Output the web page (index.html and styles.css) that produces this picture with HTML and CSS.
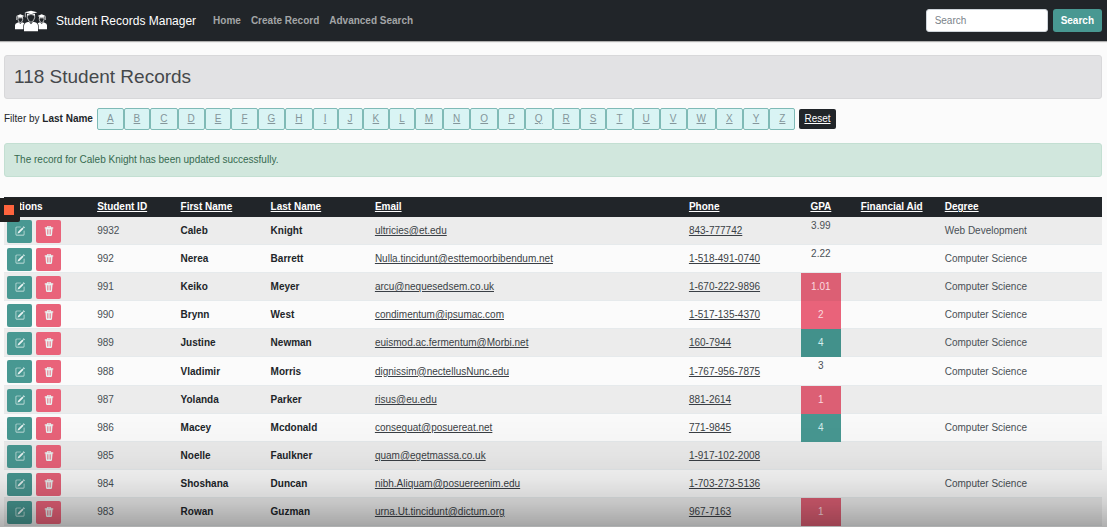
FILE: index.html
```html
<!DOCTYPE html>
<html lang="en">
<head>
<meta charset="utf-8">
<title>Student Records Manager</title>
<link rel="stylesheet" href="styles.css">
</head>
<body>
<svg class="sprite" aria-hidden="true">
  <symbol id="edit" viewBox="0 0 16 16">
    <path d="M15.502 1.94a.5.5 0 0 1 0 .706L14.459 3.69l-2-2L13.502.646a.5.5 0 0 1 .707 0l1.293 1.293zm-1.75 2.456-2-2L4.939 9.21a.5.5 0 0 0-.121.196l-.805 2.414a.25.25 0 0 0 .316.316l2.414-.805a.5.5 0 0 0 .196-.12l6.813-6.814z"/>
    <path d="M1 13.5A1.5 1.5 0 0 0 2.500 15h11a1.500 1.500 0 0 0 1.500-1.500v-6a.5.5 0 0 0-1 0v6a.5.5 0 0 1-.5.5h-11a.5.5 0 0 1-.5-.5v-11a.5.5 0 0 1 .5-.5H9a.5.5 0 0 0 0-1H2.500A1.500 1.500 0 0 0 1 2.500z"/>
  </symbol>
  <symbol id="trash" viewBox="0 0 16 16">
    <path fill-rule="evenodd" d="M6 0h4a1.500 1.500 0 0 1 1.500 1.500V2H14a1 1 0 0 1 0 2h-.3l-.9 10.200A2 2 0 0 1 10.900 16H5.100a2 2 0 0 1-1.900-1.800L2.300 4H2a1 1 0 0 1 0-2h2.500v-.5A1.500 1.500 0 0 1 6 0zm0 1.200V2h4v-.8zM4.700 5l.5 8.500h1L5.700 5zm2.800 0v8.500h1V5zm2.800 0-.5 8.500h1l.5-8.500z"/>
  </symbol>
</svg>

<header class="navbar">
  <a class="brand" href="#">
    <svg class="logo" viewBox="0 0 96 64" aria-hidden="true">
      <g id="grad-side">
        <path fill="#fff" d="M4 17 16 12l12 5-12 5zM8 20l8 3 8-3v4H8zM0 57V45q0-6 7-8l4-1 5 5 5-5 4 1q3 1 4 3v17z"/>
        <path fill="none" stroke="#fff" stroke-width="2" d="M9 23v5q1 8 7 9 6-1 7-9v-5M5 18v11"/>
      </g>
      <use href="#grad-side" transform="matrix(-1 0 0 1 96 0)"/>
      <path fill="#212529" d="M25 64V46q0-8 10-11l13-4 13 4q10 3 10 11v18z"/>
      <path fill="#fff" d="M29 6 48 1l19 5-19 6zM36 10l12 3 12-3v6q-12-4-24 0zM27 63V47q0-8 9-11l6-2 6 8 6-8 6 2q9 3 9 11v16z"/>
      <path fill="none" stroke="#fff" stroke-width="2" d="M37 15v7q2 11 11 14 9-3 11-14v-7M31 7v14"/>
    </svg>
    <span>Student Records Manager</span>
  </a>
  <nav class="nav">
    <a href="#">Home</a>
    <a href="#">Create Record</a>
    <a href="#">Advanced Search</a>
  </nav>
  <form class="search">
    <input type="search" placeholder="Search" aria-label="Search">
    <button type="button">Search</button>
  </form>
</header>

<main class="content">
  <h1 class="heading">118 Student Records</h1>
  <div class="filter">
    <span>Filter by <strong>Last Name</strong></span>
    <div class="letters">
      <a href="#">A</a><a href="#">B</a><a href="#">C</a><a href="#">D</a><a href="#">E</a><a href="#">F</a><a href="#">G</a><a href="#">H</a><a href="#">I</a><a href="#">J</a><a href="#">K</a><a href="#">L</a><a href="#">M</a><a href="#">N</a><a href="#">O</a><a href="#">P</a><a href="#">Q</a><a href="#">R</a><a href="#">S</a><a href="#">T</a><a href="#">U</a><a href="#">V</a><a href="#">W</a><a href="#">X</a><a href="#">Y</a><a href="#">Z</a>
    </div>
    <a class="reset" href="#">Reset</a>
  </div>
  <p class="alert" role="status">The record for Caleb Knight has been updated successfully.</p>

  <table class="records">
    <colgroup>
      <col class="c-actions"><col class="c-id"><col class="c-first"><col class="c-last"><col class="c-email"><col class="c-phone"><col class="c-gpa"><col class="c-aid"><col>
    </colgroup>
    <thead>
      <tr>
        <th>Actions</th>
        <th><a href="#">Student ID</a></th>
        <th><a href="#">First Name</a></th>
        <th><a href="#">Last Name</a></th>
        <th><a href="#">Email</a></th>
        <th><a href="#">Phone</a></th>
        <th class="center"><a href="#">GPA</a></th>
        <th class="center"><a href="#">Financial Aid</a></th>
        <th><a href="#">Degree</a></th>
      </tr>
    </thead>
    <tbody id="rows"></tbody>
  </table>
</main>

<div class="recorder"><span></span></div>
<div class="shade"></div>
<script src="records.js"></script>
</body>
</html>
```
FILE: styles.css
```css
* { box-sizing: border-box; }

body {
  margin: 0;
  background: #fbfbfb;
  color: #212529;
  font: 10px/14px "Liberation Sans", Arial, sans-serif;
  overflow: hidden;
}

a { color: inherit; }
.sprite { display: none; }

.navbar {
  display: flex;
  align-items: center;
  height: 41px;
  padding: 0 5px 0 15px;
  background: #212529;
  box-shadow: 0 1px 1px rgba(0, 0, 0, .3);
}
.brand {
  display: flex;
  align-items: center;
  gap: 9px;
  color: #fff;
  font-size: 12px;
  text-decoration: none;
}
.logo { width: 32px; height: 22px; }
.nav { display: flex; gap: 10px; margin-left: 17px; }
.nav a { color: #a3a5a7; font-weight: bold; text-decoration: none; }
.search { display: flex; gap: 5px; margin-left: auto; }
.search input {
  width: 122px;
  height: 23px;
  padding: 0 8px;
  border: 1px solid #ced4da;
  border-radius: 3px;
  background: #fff;
  font: inherit;
}
.search input::placeholder { color: #7b838a; }
.search button {
  height: 23px;
  padding: 0 8px;
  border: 0;
  border-radius: 3px;
  background: #489892;
  color: #fff;
  font: bold 10px/14px "Liberation Sans", Arial, sans-serif;
}

.content { padding: 14px 5px 0 4px; }
.heading {
  margin: 0 0 9px;
  padding: 9px;
  border: 1px solid #d8d8da;
  border-radius: 3px;
  background: #e2e2e4;
  color: #45484b;
  font-size: 19px;
  font-weight: normal;
  line-height: 24px;
}
.filter { display: flex; align-items: center; gap: 4px; }
.letters { display: flex; }
.letters a {
  min-width: 25px;
  padding: 3px 9px;
  border: 1px solid #7fbab6;
  border-radius: 2px;
  background: #d9f4f4;
  color: #84969b;
  text-align: center;
}
.reset {
  padding: 3px 5px;
  border-radius: 2px;
  background: #212529;
  color: #fff;
}
.alert {
  margin: 13px 0 20px;
  padding: 9px;
  border: 1px solid #c3dfd2;
  border-radius: 3px;
  background: #d1e7dd;
  color: #366a50;
}

.records {
  width: 100%;
  table-layout: fixed;
  border-collapse: collapse;
}
.c-actions { width: 8.3%; }
.c-id { width: 7.6%; }
.c-first { width: 8.2%; }
.c-last { width: 9.5%; }
.c-email { width: 28.6%; }
.c-phone { width: 10.4%; }
.c-gpa { width: 3.6%; }
.c-aid { width: 9.3%; }

.records th {
  height: 20px;
  padding: 0 2px;
  background: #212529;
  color: #fff;
  text-align: left;
}
.records td {
  height: 28px;
  padding: 0 2px;
  box-shadow: inset 0 -1px #e6eaec;
  color: #4a5056;
}
.records td a { color: #3a3f45; }
.records tbody tr:nth-child(odd) { background: #ececec; }
.records tbody tr:nth-child(6n) td { height: 29px; }
.records .name { color: #212529; font-weight: bold; }
.records .center { text-align: center; }
.records .plain { padding-top: 2px; vertical-align: top; }
.records .low { background: #e9637a; color: #fbd9df; box-shadow: none; }
.records .high { background: #489892; color: #d5efed; box-shadow: none; }
.records tr:nth-child(odd) .low { background: #dc5f74; }
.records tr:nth-child(odd) .high { background: #42918b; }

.actions { display: flex; gap: 4px; padding-left: 1px; }
.actions button {
  display: flex;
  align-items: center;
  justify-content: center;
  width: 25px;
  height: 23px;
  padding: 0;
  border: 0;
  border-radius: 2px;
  color: #fff;
}
.actions svg { width: 10px; height: 10px; fill: #e8f3f2; }
.edit { background: #489892; }
.delete { background: #e9637a; }

.recorder {
  position: fixed;
  top: 198px;
  left: 0;
  padding: 7px 6px 7px 4px;
  border-radius: 0 2px 2px 0;
  background: #212121;
}
.recorder span { display: block; width: 10px; height: 10px; background: #ff643d; }
.shade {
  position: fixed;
  inset: auto 0 0;
  height: 120px;
  pointer-events: none;
  background: linear-gradient(rgba(0, 0, 0, 0), rgba(0, 0, 0, .03) 40%, rgba(0, 0, 0, .08) 60%, rgba(0, 0, 0, .16) 80%, rgba(0, 0, 0, .3));
}
```
FILE: records.js
```js
const records = [
  ["9932", "Caleb", "Knight", "ultricies@et.edu", "843-777742", "3.99", "Web Development"],
  ["992", "Nerea", "Barrett", "Nulla.tincidunt@esttemoorbibendum.net", "1-518-491-0740", "2.22", "Computer Science"],
  ["991", "Keiko", "Meyer", "arcu@nequesedsem.co.uk", "1-670-222-9896", "1.01", "Computer Science"],
  ["990", "Brynn", "West", "condimentum@ipsumac.com", "1-517-135-4370", "2", "Computer Science"],
  ["989", "Justine", "Newman", "euismod.ac.fermentum@Morbi.net", "160-7944", "4", "Computer Science"],
  ["988", "Vladimir", "Morris", "dignissim@nectellusNunc.edu", "1-767-956-7875", "3", "Computer Science"],
  ["987", "Yolanda", "Parker", "risus@eu.edu", "881-2614", "1", ""],
  ["986", "Macey", "Mcdonald", "consequat@posuereat.net", "771-9845", "4", "Computer Science"],
  ["985", "Noelle", "Faulkner", "quam@egetmassa.co.uk", "1-917-102-2008", "", ""],
  ["984", "Shoshana", "Duncan", "nibh.Aliquam@posuereenim.edu", "1-703-273-5136", "", "Computer Science"],
  ["983", "Rowan", "Guzman", "urna.Ut.tincidunt@dictum.org", "967-7163", "1", ""]
];

function gpaClass(gpa) {
  if (gpa === "") return "";
  if (Number(gpa) <= 2) return "low";
  return Number(gpa) >= 4 ? "high" : "plain";
}

document.getElementById("rows").innerHTML = records.map(([id, first, last, email, phone, gpa, degree]) => `
  <tr>
    <td><div class="actions">
      <button type="button" class="edit" aria-label="Edit ${first} ${last}"><svg><use href="#edit"/></svg></button>
      <button type="button" class="delete" aria-label="Delete ${first} ${last}"><svg><use href="#trash"/></svg></button>
    </div></td>
    <td>${id}</td>
    <td class="name">${first}</td>
    <td class="name">${last}</td>
    <td><a href="#">${email}</a></td>
    <td><a href="#">${phone}</a></td>
    <td class="center ${gpaClass(gpa)}">${gpa}</td>
    <td></td>
    <td>${degree}</td>
  </tr>`).join("");
```
